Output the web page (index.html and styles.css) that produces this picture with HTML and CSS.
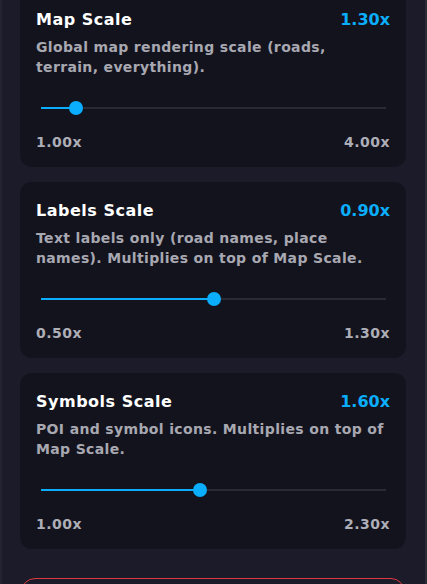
FILE: index.html
```html
<!DOCTYPE html>
<html>
<head>
<meta charset="utf-8">
<link rel="stylesheet" href="styles.css">
</head>
<body>
<div class="panel">
  <div class="list">
    <section class="card first">
      <div class="head"><span class="title">Map Scale</span><span class="value">1.30x</span></div>
      <p class="desc">Global map rendering scale (roads, terrain, everything).</p>
      <div class="slider"><div class="track"><div class="fill" style="width:10%"><span class="thumb"></span></div></div></div>
      <div class="range"><span>1.00x</span><span>4.00x</span></div>
    </section>
    <section class="card">
      <div class="head"><span class="title">Labels Scale</span><span class="value">0.90x</span></div>
      <p class="desc">Text labels only (road names, place names). Multiplies on top of Map Scale.</p>
      <div class="slider"><div class="track"><div class="fill" style="width:50%"><span class="thumb"></span></div></div></div>
      <div class="range"><span>0.50x</span><span>1.30x</span></div>
    </section>
    <section class="card">
      <div class="head"><span class="title">Symbols Scale</span><span class="value">1.60x</span></div>
      <p class="desc">POI and symbol icons. Multiplies on top of Map Scale.</p>
      <div class="slider"><div class="track"><div class="fill" style="width:46.15%"><span class="thumb"></span></div></div></div>
      <div class="range"><span>1.00x</span><span>2.30x</span></div>
    </section>
    <button class="reset" aria-label="Reset to defaults"></button>
  </div>
</div>
</body>
</html>
```
FILE: styles.css
```css
html, body {
  margin: 0;
  padding: 0;
  background: #1b1b29;
}
body {
  font-family: "DejaVu Sans", "Liberation Sans", sans-serif;
  font-weight: bold;
}
.panel {
  width: 427px;
  height: 584px;
  box-sizing: border-box;
  overflow: hidden;
  background: #1b1b29;
  border-left: 2px solid #242431;
  border-right: 2px solid #2c2c38;
}
.list {
  display: flex;
  flex-direction: column;
  gap: 15px;
  padding: 0 19px 0 18px;
}
.card {
  background: #13131e;
  border-radius: 12px;
  padding: 16px;
  height: 176px;
  box-sizing: border-box;
}
.card.first {
  margin-top: -9px;
}
.head {
  display: flex;
  justify-content: space-between;
  align-items: baseline;
  line-height: 25px;
}
.title {
  color: #ffffff;
  font-size: 16px;
  letter-spacing: 0.5px;
}
.value {
  color: #0aaefc;
  font-size: 16px;
}
.desc {
  margin: 5px 0 0 0;
  color: #a8a8b1;
  font-size: 14px;
  line-height: 20px;
  letter-spacing: 0.35px;
  height: 40px;
}
.slider {
  margin-top: 21px;
  height: 20px;
  padding: 0 4px 0 5px;
  display: flex;
  align-items: center;
}
.track {
  flex: 1;
  height: 2px;
  background: #2a2a37;
  position: relative;
}
.fill {
  height: 2px;
  background: #0aaefc;
  position: relative;
}
.thumb {
  position: absolute;
  right: -7px;
  top: -6px;
  width: 14px;
  height: 14px;
  border-radius: 50%;
  background: #0aaefc;
}
.range {
  margin-top: 14px;
  display: flex;
  justify-content: space-between;
  line-height: 20px;
  font-size: 14px;
  letter-spacing: 0.5px;
  color: #aeaeb7;
}
.reset {
  margin: 14px 1px 0 1px;
  height: 44px;
  border: 1.5px solid #e0393e;
  border-radius: 14px;
  background: transparent;
  padding: 0;
}
```
